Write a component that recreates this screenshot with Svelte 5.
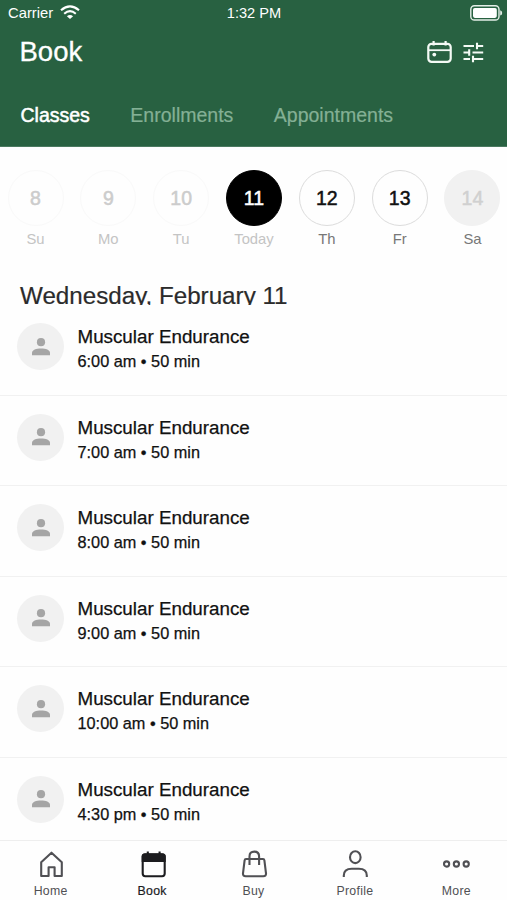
<script lang="ts">
    const tabs = ["Classes", "Enrollments", "Appointments"];

    const days = [
        { date: 8, name: "Su", state: "past" },
        { date: 9, name: "Mo", state: "past" },
        { date: 10, name: "Tu", state: "past" },
        { date: 11, name: "Today", state: "today" },
        { date: 12, name: "Th", state: "open" },
        { date: 13, name: "Fr", state: "open" },
        { date: 14, name: "Sa", state: "closed" },
    ];

    const classes = ["6:00 am", "7:00 am", "8:00 am", "9:00 am", "10:00 am", "4:30 pm"].map((time) => ({
        name: "Muscular Endurance",
        time,
        minutes: 50,
    }));

    const nav = ["Home", "Book", "Buy", "Profile", "More"];

    let activeTab = $state("Classes");
    let activeNav = $state("Book");
</script>

<div class="app">
    <header>
        <div class="status">
            <div class="carrier">
                <span>Carrier</span>
                <svg width="20" height="15" viewBox="0 0 20 15" fill="none" stroke="#fff" stroke-width="2.1">
                    <path d="M1 5.2Q10-2.6 19 5.2" />
                    <path d="M4.2 8.7Q10 3.7 15.8 8.7" />
                    <path d="M10 14L6.9 11.2Q10 8.6 13.1 11.2Z" fill="#fff" stroke="none" />
                </svg>
            </div>
            <span class="clock">1:32 PM</span>
            <svg class="battery" width="33" height="16" viewBox="0 0 33 16">
                <rect x=".8" y=".8" width="28.2" height="14.2" rx="3.6" fill="none" stroke="#e4eee7" stroke-width="1.4" />
                <rect x="3" y="2.9" width="23.8" height="10" rx="1.8" fill="#fff" />
                <path d="M30.2 5.2Q32.2 5.9 32.2 7.9T30.2 10.6Z" fill="#e4eee7" />
            </svg>
        </div>

        <div class="title">
            <h1>Book</h1>
            <div class="actions">
                <svg width="26" height="24" viewBox="0 0 26 24" fill="none" stroke="#f4faf5" stroke-width="2.2">
                    <rect x="1.3" y="3.8" width="22.4" height="18" rx="3.2" />
                    <path d="M2 10.2H23.6" stroke-width="1.8" />
                    <path d="M6.6 1V5.5M18.6 1V5.5" />
                    <circle cx="7.3" cy="14.6" r="1.9" fill="#f4faf5" stroke="none" />
                </svg>
                <svg width="21" height="21" viewBox="0 0 21 21" stroke="#f4faf5" stroke-width="2.1">
                    <path d="M.5 4H11M14.5 4H20.2M14 .8V7.2M.5 10.5H6.5M9.5 10.5H20.2M6.2 7.3V13.7M.5 17H7M10 17H20.2M10 13.8V20.2" />
                </svg>
            </div>
        </div>

        <nav class="tabs">
            {#each tabs as tab}
                <button class:active={activeTab === tab} onclick={() => (activeTab = tab)}>{tab}</button>
            {/each}
        </nav>
    </header>

    <section class="week">
        {#each days as day}
            <div class="day {day.state}">
                <div class="circle">{day.date}</div>
                <span>{day.name}</span>
            </div>
        {/each}
    </section>

    <h2>Wednesday, February 11</h2>

    <main>
        {#each classes as item}
            <div class="row">
                <div class="avatar">
                    <svg width="18" height="18" viewBox="0 0 18 18" fill="#a5a5a5">
                        <circle cx="9" cy="4.2" r="4.1" />
                        <path d="M0 17.3V15C0 12 4.2 10.6 9 10.6S18 12 18 15V17.3Z" />
                    </svg>
                </div>
                <div class="info">
                    <div class="name">{item.name}</div>
                    <div class="time">{item.time} • {item.minutes} min</div>
                </div>
            </div>
        {/each}
    </main>

    <nav class="bottom">
        {#each nav as item}
            <button class:active={activeNav === item} onclick={() => (activeNav = item)}>
                <svg width="30" height="30" viewBox="0 0 30 30" fill="none" stroke="currentColor" stroke-width="2.1">
                    {#if item === "Home"}
                        <path d="M5.2 27V13.2L15.5 3.7L25.8 13.2V27H18.6V18.2H12.6V27Z" stroke-linejoin="round" />
                    {:else if item === "Book"}
                        <rect x="5.7" y="5.2" width="22" height="22" rx="2.6" />
                        <path d="M4.7 13V7.5Q4.7 4.5 7.7 4.5H25.7Q28.7 4.5 28.7 7.5V13Z" fill="currentColor" stroke="none" />
                        <path d="M10.8 2.5V6M22.6 2.5V6" />
                    {:else if item === "Buy"}
                        <path d="M7 10H24Q25.2 10 25.4 11.3L27 24.3Q27.3 27.2 24.3 27.2H6.7Q3.7 27.2 4 24.3L5.6 11.3Q5.8 10 7 10Z" />
                        <path d="M10.5 16V7.5Q10.5 2.6 15.3 2.6T20.1 7.5V16" />
                    {:else if item === "Profile"}
                        <ellipse cx="15.3" cy="8.2" rx="5.3" ry="5.9" />
                        <path d="M3.8 28V26.5Q3.8 19.7 11.8 19.7H18.8Q26.8 19.7 26.8 26.5V28" />
                    {:else}
                        <circle cx="5.6" cy="15" r="2.6" />
                        <circle cx="15.4" cy="15" r="2.6" />
                        <circle cx="25.2" cy="15" r="2.6" />
                    {/if}
                </svg>
                <span>{item}</span>
            </button>
        {/each}
    </nav>
</div>

<style>
    :global(body) {
        margin: 0;
        background: #fff;
    }

    .app {
        display: flex;
        flex-direction: column;
        width: 507px;
        height: 900px;
        overflow: hidden;
        background: #fefefe;
        color: #111;
        font-family: "Liberation Sans", Arial, sans-serif;
    }

    button {
        margin: 0;
        padding: 0;
        border: 0;
        background: none;
        font: inherit;
    }

    svg {
        display: block;
        flex: none;
    }

    header {
        flex: none;
        box-sizing: border-box;
        height: 147px;
        background: #286141;
        color: #fff;
        border-bottom: 1px solid #4b7a60;
    }

    .status {
        display: grid;
        grid-template-columns: 1fr auto 1fr;
        align-items: center;
        height: 25px;
        padding: 0 4px 0 8px;
        font-size: 14.8px;
    }

    .carrier {
        display: flex;
        align-items: center;
        gap: 7px;
    }

    .clock {
        font-size: 14.6px;
        padding-right: 3px;
    }

    .battery {
        justify-self: end;
    }

    .title {
        display: flex;
        align-items: center;
        justify-content: space-between;
        height: 54px;
        padding: 0 23px 0 19.5px;
    }

    h1 {
        margin: 0;
        font-size: 27.5px;
        font-weight: 400;
        -webkit-text-stroke: 0.3px;
    }

    .actions {
        display: flex;
        align-items: center;
        gap: 10px;
    }

    .tabs {
        display: flex;
        gap: 40.5px;
        padding: 25px 20.5px 0;
        font-size: 19.5px;
        line-height: 22px;
    }

    .tabs button {
        color: #84b095;
        -webkit-text-stroke: 0.2px;
    }

    .tabs .active {
        color: #fff;
        -webkit-text-stroke: 0.5px;
    }

    .week {
        flex: none;
        display: flex;
        justify-content: space-between;
        padding: 23px 7px 0 8px;
        height: 89px;
    }

    .day {
        display: flex;
        flex-direction: column;
        align-items: center;
        width: 55px;
        color: #777;
        font-size: 14.8px;
        line-height: 18px;
        gap: 4px;
    }

    .circle {
        box-sizing: border-box;
        width: 56px;
        height: 56px;
        border: 1px solid #dcdcdc;
        border-radius: 50%;
        color: #111;
        font-size: 19.5px;
        line-height: 54px;
        text-align: center;
        -webkit-text-stroke: 0.5px;
    }

    .past,
    .today {
        color: #c4c4c4;
    }

    .past .circle {
        border-color: #f9f9f9;
        color: #ccc;
    }

    .today .circle {
        border-color: #000;
        background: #000;
        color: #fff;
    }

    .closed .circle {
        border-color: #f1f1f1;
        background: #f1f1f1;
        color: #d0d0d0;
    }

    h2 {
        flex: none;
        margin: 23px 0 0;
        padding-left: 20px;
        height: 23px;
        overflow: hidden;
        color: #2b2b2b;
        font-size: 24.2px;
        font-weight: 400;
        line-height: 28px;
        -webkit-text-stroke: 0.2px;
    }

    main {
        flex: 1;
        min-height: 0;
        overflow: hidden;
    }

    .row {
        display: flex;
        box-sizing: border-box;
        height: 90.5px;
        padding: 18px 17px 0;
        gap: 13.5px;
        border-bottom: 1px solid #f1f1f1;
    }

    .row:last-child {
        border-bottom: 0;
    }

    .avatar {
        display: flex;
        align-items: center;
        justify-content: center;
        width: 47px;
        height: 47px;
        border-radius: 50%;
        background: #f1f1f1;
    }

    .info {
        padding-top: 3px;
    }

    .name {
        font-size: 18.8px;
        line-height: 22px;
        -webkit-text-stroke: 0.25px;
    }

    .time {
        margin-top: 3px;
        font-size: 16.3px;
        line-height: 20px;
        -webkit-text-stroke: 0.25px;
    }

    .bottom {
        flex: none;
        display: flex;
        box-sizing: border-box;
        height: 60px;
        border-top: 1px solid #eee;
    }

    .bottom button {
        display: flex;
        flex: 1;
        flex-direction: column;
        align-items: center;
        padding-top: 8px;
        gap: 5px;
        color: #505054;
        font-size: 12.3px;
        line-height: 15px;
        letter-spacing: 0.3px;
    }

    .bottom .active {
        color: #1c1c1f;
        -webkit-text-stroke: 0.2px;
    }
</style>
